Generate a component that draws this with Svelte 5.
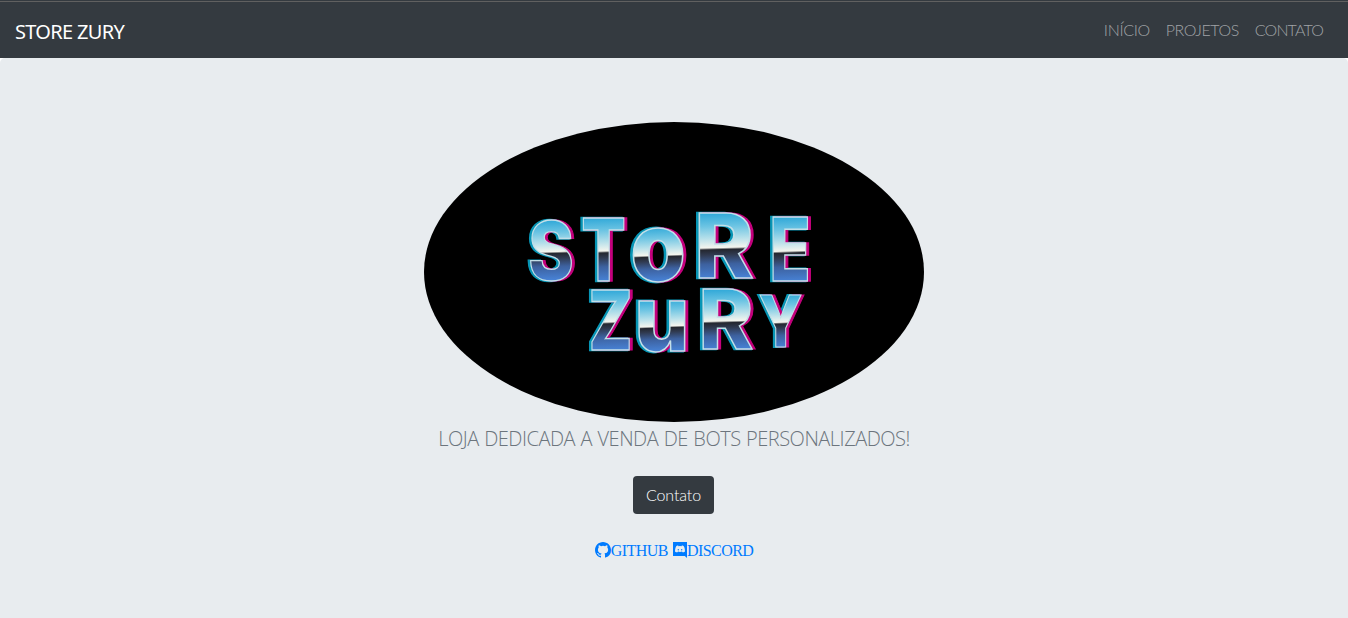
<script>
  const letters = [
    { c: 'S', x: 551, y: 279.5, sx: 0.69, sy: 0.81 },
    { c: 'T', x: 603.5, y: 280.5, sx: 0.66, sy: 0.86 },
    { c: 'o', x: 658, y: 280.5, sx: 0.9, sy: 0.96, low: true },
    { c: 'R', x: 724, y: 278, sx: 0.9, sy: 0.89 },
    { c: 'E', x: 790, y: 281, sx: 0.68, sy: 0.875 },
    { c: 'Z', x: 610.5, y: 350, sx: 0.65, sy: 0.82 },
    { c: 'u', x: 662, y: 350.5, sx: 0.87, sy: 0.92, low: true },
    { c: 'R', x: 726, y: 349, sx: 0.83, sy: 0.82 },
    { c: 'Y', x: 780.5, y: 347, sx: 0.58, sy: 0.72 }
  ];
  const place = (l, dx) => `matrix(${l.sx} 0 0 ${l.sy} ${l.x + dx - 424} ${l.y - 122})`;
</script>

<nav>
  <a class="brand" href="#top">STORE ZURY</a>
  <div class="menu">
    <a class="n1" href="#inicio">INÍCIO</a>
    <a class="n2" href="#projetos">PROJETOS</a>
    <a class="n3" href="#contato">CONTATO</a>
  </div>
</nav>
<main>
  <svg class="logo" viewBox="0 0 500 300" role="img" aria-label="Store Zury">
    <defs>
      {#each [['cap', -73], ['low', -56]] as [id, top]}
        <linearGradient {id} gradientUnits="userSpaceOnUse" x1="0" y1={top} x2="2" y2="0">
          <stop offset="0" stop-color="#30a8d8" />
          <stop offset=".2" stop-color="#6cc4e3" />
          <stop offset=".38" stop-color="#b4dfea" />
          <stop offset=".53" stop-color="#f4f5ee" />
          <stop offset=".56" stop-color="#24272f" />
          <stop offset=".64" stop-color="#303a50" />
          <stop offset=".78" stop-color="#3d619f" />
          <stop offset="1" stop-color="#4781d4" />
        </linearGradient>
      {/each}
    </defs>
    <rect width="500" height="300" />
    {#each letters as l}
      <text class="cyan" transform={place(l, -2)}>{l.c}</text>
      <text class="pink" transform={place(l, 3)}>{l.c}</text>
      <text class="face" fill={l.low ? 'url(#low)' : 'url(#cap)'} transform={place(l, 0)}>{l.c}</text>
    {/each}
  </svg>
  <p class="lead">LOJA DEDICADA A VENDA DE BOTS PERSONALIZADOS!</p>
  <a class="button" href="#contato">Contato</a>
  <div class="social">
    <a href="#github"><svg width="16" height="16" viewBox="0 0 16 16"><path d="M8 0C3.58 0 0 3.58 0 8c0 3.54 2.29 6.53 5.47 7.59.4.07.55-.17.55-.38 0-.19-.01-.82-.01-1.49-2.01.37-2.53-.49-2.69-.94-.09-.23-.48-.94-.82-1.13-.28-.15-.68-.52-.01-.53.63-.01 1.08.58 1.23.82.72 1.21 1.87.87 2.33.66.07-.52.28-.87.51-1.07-1.78-.2-3.64-.89-3.64-3.95 0-.87.31-1.59.82-2.15-.08-.2-.36-1.02.08-2.12 0 0 .67-.21 2.2.82a7.4 7.4 0 0 1 4 0c1.53-1.04 2.2-.82 2.2-.82.44 1.1.16 1.92.08 2.12.51.56.82 1.27.82 2.15 0 3.07-1.87 3.75-3.65 3.95.29.25.54.73.54 1.48 0 1.07-.01 1.93-.01 2.2 0 .21.15.46.55.38A8 8 0 0 0 16 8c0-4.42-3.58-8-8-8Z" /></svg><span>GITHUB</span></a>
    <a href="#discord"><svg width="14" height="16" viewBox="0 0 14 16"><path fill-rule="evenodd" d="M0 0h14v16l-2.2-2H0ZM2 9.5c1.1.9 2 .9 2.5.8l.5-.8c1.2.5 2.8.5 4 0l.5.8c.8 0 1.6-.2 2.5-.9 0-2-.5-3.8-1.2-5.1-1-.7-1.9-.7-1.9-.7l-.4.6a7 7 0 0 0-3 0l-.4-.6s-.9 0-1.9.7C2.500 5.600 2 7.500 2 9.500Zm3.300-2.500a.7.8 0 1 1 0 1.600.7.8 0 0 1 0-1.600Zm3.400 0a.7.8 0 1 1 0 1.600.7.8 0 0 1 0-1.600Z" /></svg><span>DISCORD</span></a>
  </div>
</main>

<style>
  :global(body) { background: #fff; }
  * { box-sizing: border-box; }
  a { text-decoration: none; }
  nav {
    height: 58px;
    padding: 2px 17px 0 15px;
    display: flex;
    align-items: center;
    justify-content: space-between;
    background: linear-gradient(#343a40 0 1px, #606060 1px 2px, #343a40 2px);
  }
  .brand { color: #fff; font: 20px/30px "Noto Sans", sans-serif; letter-spacing: -.68px; padding-top: 3px; }
  .menu { display: flex; font: 300 16px/24px Lato, sans-serif; }
  .menu a { color: #a0a3a6; padding: 0 8px; white-space: nowrap; }
  .menu .n1 { letter-spacing: -.35px; }
  .menu .n2 { letter-spacing: -.45px; }
  .menu .n3 { letter-spacing: -.85px; }
  main {
    height: 560px;
    padding-top: 64px;
    display: flex;
    flex-direction: column;
    align-items: center;
    background: #e8ecef;
    border-radius: 5px 5px 0 0;
  }
  .logo { display: block; width: 500px; height: 300px; border-radius: 50%; flex: none; }
  .logo text { font: 800 100px Inter, sans-serif; text-anchor: middle; }
  .logo .cyan { fill: #0795b5; stroke: #0795b5; stroke-width: 3; }
  .logo .pink { fill: #c4007d; stroke: #c4007d; stroke-width: 1.5; }
  .logo .face { stroke: #c3dfe8; stroke-width: 1.7; }
  .lead { margin: 2px 0 0; font: 300 20px/30px "Open Sans", sans-serif; letter-spacing: -.5px; word-spacing: .8px; color: #6c757d; white-space: nowrap; }
  .button {
    margin: 22px 1px 0 0;
    width: 81px;
    height: 38px;
    border-radius: 4px;
    background: #343a40;
    color: #fff;
    font: 300 16px/38px Lato, sans-serif;
    letter-spacing: -.1px;
    text-align: center;
  }
  .social { margin-top: 25px; display: flex; gap: 5px; }
  .social a { display: flex; align-items: center; color: #007bff; font: 16px/24px "Liberation Serif", serif; letter-spacing: -.55px; }
  .social svg { fill: currentColor; flex: none; position: relative; top: -1px; }
</style>
